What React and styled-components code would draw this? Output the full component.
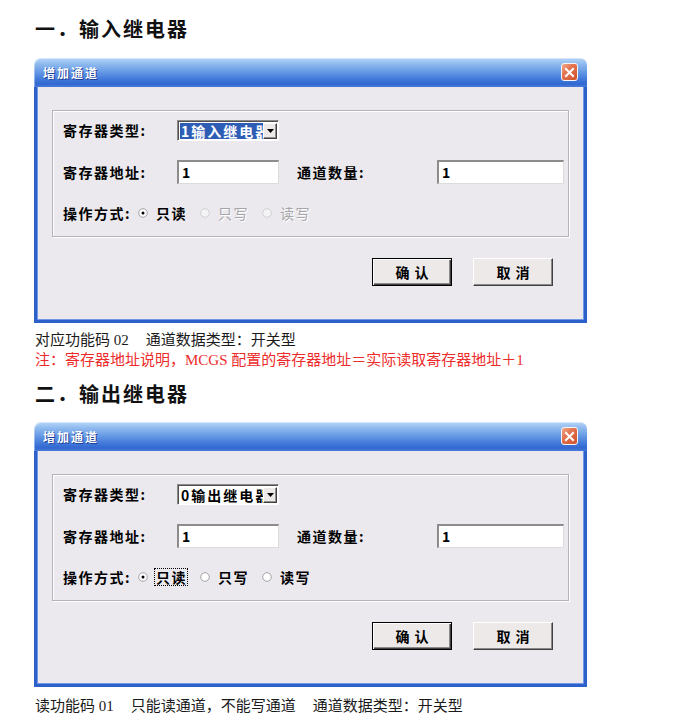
import React from "react";
import styled, { createGlobalStyle, css } from "styled-components";

const GlobalStyle = createGlobalStyle`
  html, body { margin: 0; padding: 0; background: #ffffff; }
  body { font-family: "Noto Sans CJK SC", sans-serif; }
`;

const Page = styled.div`
  width: 696px;
  height: 725px;
  box-sizing: border-box;
  padding: 17px 0 0 34px;
  overflow: hidden;
`;

const Heading = styled.h2`
  margin: ${(p) => p.$before || 0}px 0 ${(p) => p.$after}px 1px;
  height: 24px;
  font: 700 20px/24px "Noto Sans CJK SC", sans-serif;
  letter-spacing: 2px;
  color: #111;
`;

const Note = styled.p`
  margin: 0 0 0 1px;
  height: 20px;
  font: 400 15px/20px "Liberation Serif", "Noto Sans CJK SC", serif;
  color: ${(p) => (p.$red ? "#ee2b2b" : "#1a1a1a")};
  white-space: nowrap;
`;

const Spacer = styled.span`
  display: inline-block;
  width: ${(p) => p.$w}px;
`;

const Window = styled.div`
  width: 553px;
  height: 265px;
  margin-bottom: ${(p) => p.$after}px;
  display: flex;
  flex-direction: column;
`;

const TitleBar = styled.div`
  height: 29px;
  flex: none;
  box-sizing: border-box;
  border-radius: 7px 7px 0 0;
  background: linear-gradient(
    to bottom,
    #b9d6f7 0%,
    #93bdef 18%,
    #6a9de6 45%,
    #4077d9 75%,
    #3168d1 90%,
    #4a7bd9 100%
  );
  display: flex;
  align-items: center;
  justify-content: space-between;
  padding: 0 9px 0 9px;
  box-shadow: inset 1px 1px 0 rgba(255, 255, 255, 0.4);
`;

const Title = styled.span`
  color: #fff;
  font: 700 12px/1 "Noto Sans CJK SC", sans-serif;
  letter-spacing: 2px;
  text-shadow: 1px 1px 0 #1d3f9a;
`;

const CloseButton = styled.div`
  width: 17px;
  height: 18px;
  box-sizing: border-box;
  border-radius: 3px;
  border: 1px solid #f4f4f4;
  background: linear-gradient(135deg, #f0aa8c 0%, #e4734f 40%, #cf522e 100%);
  display: flex;
  align-items: center;
  justify-content: center;
  margin-top: -1px;
`;

const Body = styled.div`
  flex: 1;
  background: #ebe9ed;
  border: 3px solid #2e60cb;
  border-top: none;
  box-shadow: inset 1px 0 0 #6f97e4, inset -1px 0 0 #6f97e4, inset 0 -1px 0 #6f97e4;
  padding: 23px 15px 0;
  display: flex;
  flex-direction: column;
`;

const Group = styled.div`
  height: 127px;
  box-sizing: border-box;
  border: 1px solid #b3b2b7;
  box-shadow: inset 1px 1px 0 #fff, 1px 1px 0 #fff;
  padding: 8px 6px 0 10px;
  display: grid;
  grid-template-columns: 114px 102px 158px 127px;
  grid-template-rows: 22px 24px 20px;
  row-gap: 19px;
  align-items: center;
`;

const Label = styled.span`
  font: 700 14px/1 "Noto Sans CJK SC", sans-serif;
  letter-spacing: 1.5px;
  white-space: nowrap;
  color: #000;
  padding-left: ${(p) => p.$indent || 0}px;
  ${(p) =>
    p.$disabled &&
    css`
      font-weight: 400;
      color: #a6a5aa;
      text-shadow: 1px 1px 0 #fff;
    `}
`;

const Combo = styled.div`
  width: 102px;
  height: 21px;
  box-sizing: border-box;
  border: 1px solid;
  border-color: #8a8a8a #ffffff #ffffff #8a8a8a;
  box-shadow: inset 1px 1px 0 #505050;
  background: #fff;
  display: flex;
  padding: 2px 1px 1px 2px;
`;

const ComboText = styled.div`
  flex: 1;
  overflow: hidden;
  white-space: nowrap;
  font: 700 14px/17px "Noto Sans CJK SC", sans-serif;
  letter-spacing: 2px;
  padding-left: 1px;
  color: ${(p) => (p.$selected ? "#fff" : "#000")};
  background: ${(p) => (p.$selected ? "#2e5db6" : "transparent")};
`;

const ComboArrow = styled.div`
  width: 14px;
  flex: none;
  box-sizing: border-box;
  background: #ece9e8;
  border: 1px solid;
  border-color: #fff #404040 #404040 #fff;
  box-shadow: inset -1px -1px 0 #909090;
  display: flex;
  align-items: center;
  justify-content: center;
`;

const Field = styled.div`
  width: ${(p) => p.$w}px;
  height: 24px;
  box-sizing: border-box;
  background: #fff;
  border-style: solid;
  border-width: 2px 1px 1px 2px;
  border-color: #8c8c8c #dcdcdc #dcdcdc #8c8c8c;
  font: 700 14px/21px "Noto Sans CJK SC", sans-serif;
  padding-left: 3px;
  color: #000;
`;

const ModeRow = styled.div`
  grid-column: 1 / -1;
  display: flex;
  align-items: center;
`;

const ModeLabel = styled(Label)`
  width: 75px;
`;

const RadioOption = styled.span`
  display: flex;
  align-items: center;
  gap: 7px;
  margin-right: 14px;
`;

const RadioText = styled(Label)`
  padding: 1px 0 1px 1px;
  margin-right: -1px;
  outline: ${(p) => (p.$focus ? "1px dotted #000" : "none")};
`;

const ButtonRow = styled.div`
  display: flex;
  justify-content: flex-end;
  gap: 21px;
  margin-top: 21px;
  padding-right: 16px;
`;

const Button = styled.div`
  width: 80px;
  height: 28px;
  box-sizing: border-box;
  display: flex;
  align-items: center;
  justify-content: center;
  background: #ece9e8;
  font: 700 14px/1 "Noto Sans CJK SC", sans-serif;
  letter-spacing: 5px;
  padding-left: 5px;
  color: #000;
  border: 1px solid;
  border-color: #fff #404040 #404040 #fff;
  box-shadow: inset -1px -1px 0 #8a8a8a;
  ${(p) =>
    p.$default &&
    css`
      border-color: #000;
      box-shadow: inset 1px 1px 0 #fff, inset -1px -1px 0 #404040,
        inset -2px -2px 0 #8a8a8a;
    `}
`;

function Radio({ checked, disabled }) {
  return (
    <svg width="10" height="10" viewBox="0 0 10 10">
      <circle
        cx="5"
        cy="5"
        r="4.3"
        fill={disabled ? "#f3f2f5" : "#ffffff"}
        stroke={disabled ? "#cfcfd3" : "#a3a3a8"}
        strokeWidth="1"
      />
      {checked && <circle cx="5" cy="5" r="1.5" fill="#000" />}
    </svg>
  );
}

function ChannelDialog({ typeText, selected, writeDisabled, focusRead, after }) {
  return (
    <Window $after={after}>
      <TitleBar>
        <Title>增加通道</Title>
        <CloseButton>
          <svg width="11" height="11" viewBox="0 0 11 11">
            <path d="M2 2 L9 9 M9 2 L2 9" stroke="#fff" strokeWidth="2" strokeLinecap="square" />
          </svg>
        </CloseButton>
      </TitleBar>
      <Body>
        <Group>
          <Label>寄存器类型:</Label>
          <Combo>
            <ComboText $selected={selected}>{typeText}</ComboText>
            <ComboArrow>
              <svg width="7" height="4" viewBox="0 0 7 4">
                <path d="M0 0 H7 L3.5 4 Z" fill="#000" />
              </svg>
            </ComboArrow>
          </Combo>
          <span />
          <span />
          <Label>寄存器地址:</Label>
          <Field $w={102}>1</Field>
          <Label $indent={18}>通道数量:</Label>
          <Field $w={127}>1</Field>
          <ModeRow>
            <ModeLabel>操作方式:</ModeLabel>
            <RadioOption>
              <Radio checked />
              <RadioText $focus={focusRead}>只读</RadioText>
            </RadioOption>
            <RadioOption>
              <Radio disabled={writeDisabled} />
              <RadioText $disabled={writeDisabled}>只写</RadioText>
            </RadioOption>
            <RadioOption>
              <Radio disabled={writeDisabled} />
              <RadioText $disabled={writeDisabled}>读写</RadioText>
            </RadioOption>
          </ModeRow>
        </Group>
        <ButtonRow>
          <Button $default>确认</Button>
          <Button>取消</Button>
        </ButtonRow>
      </Body>
    </Window>
  );
}

export default function App() {
  return (
    <>
      <GlobalStyle />
      <Page>
        <Heading $after={17}>一．输入继电器</Heading>
        <ChannelDialog typeText="1输入继电器" selected writeDisabled after={7} />
        <Note>
          对应功能码 02<Spacer $w={17} />通道数据类型：开关型
        </Note>
        <Note $red>注：寄存器地址说明，MCGS 配置的寄存器地址＝实际读取寄存器地址＋1</Note>
        <Heading $before={12} $after={16}>二．输出继电器</Heading>
        <ChannelDialog typeText="0输出继电器" focusRead after={9} />
        <Note>
          读功能码 01<Spacer $w={17} />只能读通道，不能写通道<Spacer $w={17} />通道数据类型：开关型
        </Note>
      </Page>
    </>
  );
}
